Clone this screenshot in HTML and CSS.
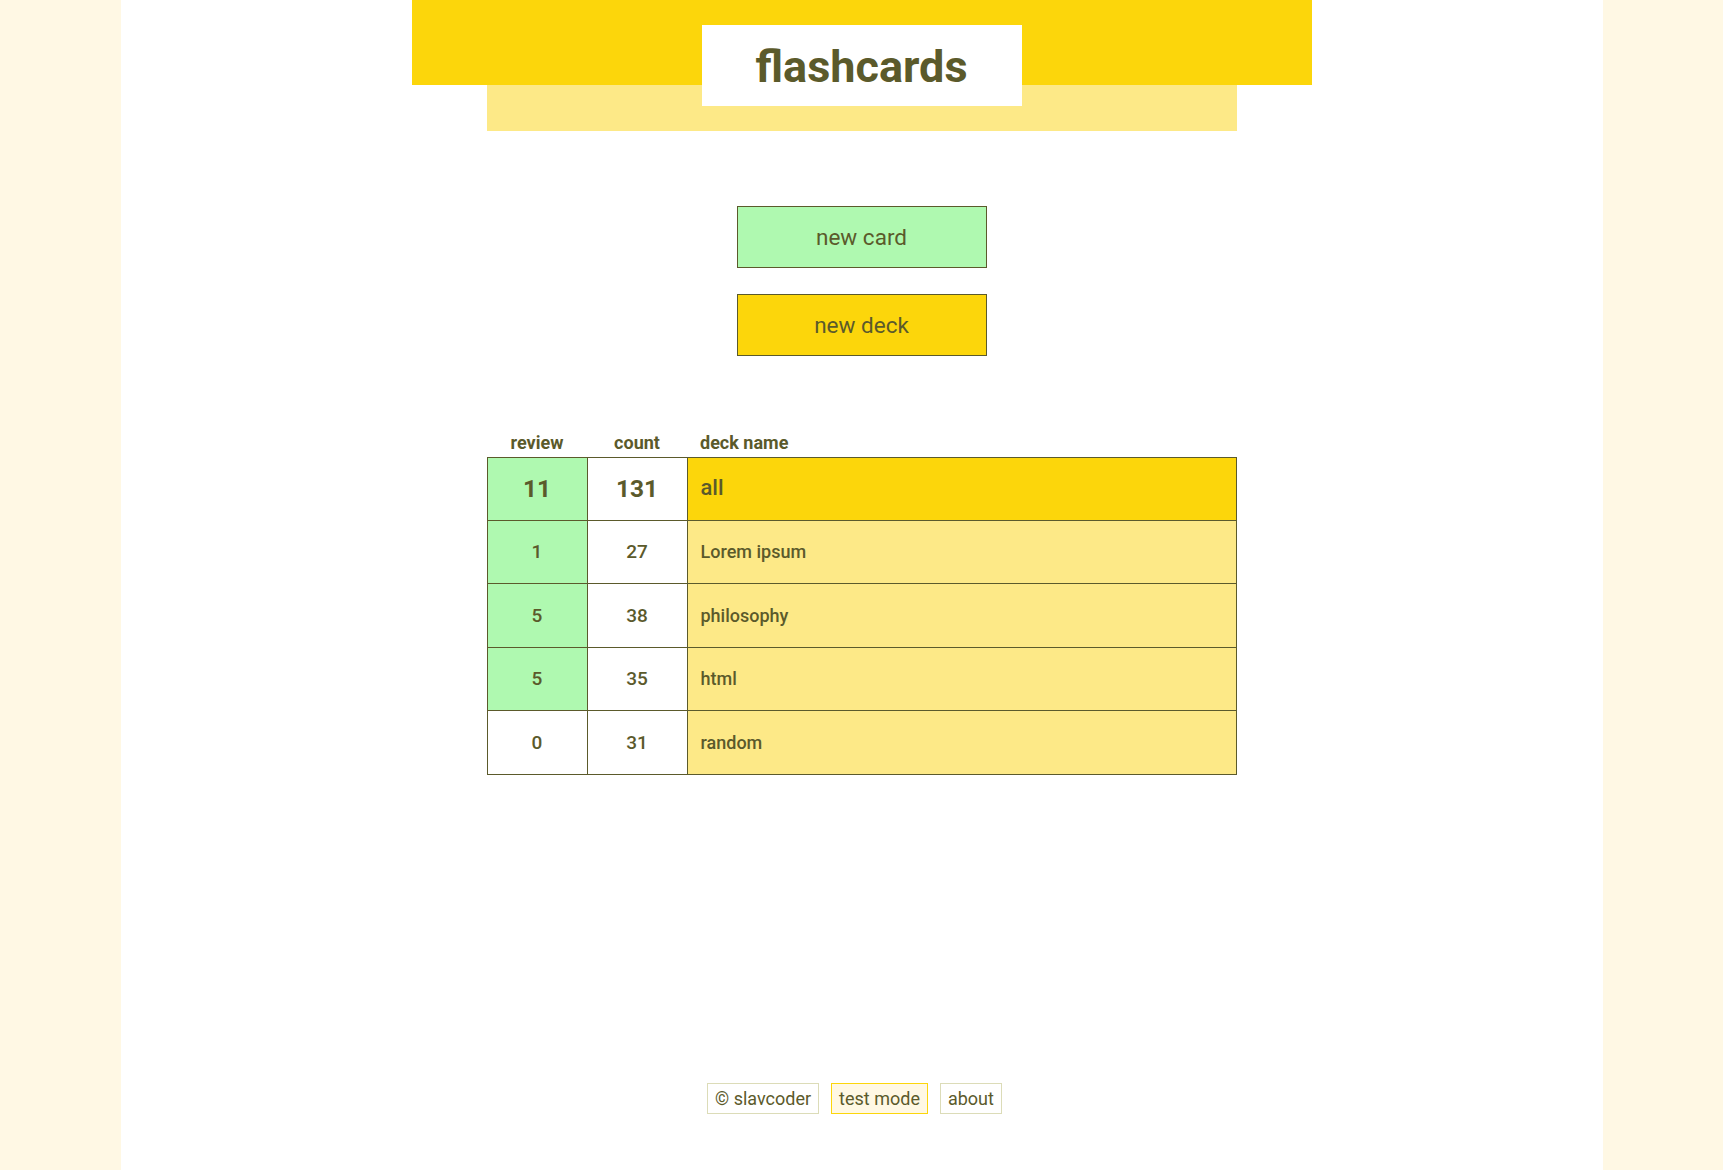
FILE: index.html
```html
<!DOCTYPE html>
<html lang="en">
<head>
<meta charset="utf-8">
<title>flashcards</title>
<link rel="stylesheet" href="styles.css">
</head>
<body>
<div class="page">
  <header class="header">
    <div class="header-bar"></div>
    <div class="header-band"></div>
    <h1 class="title">flashcards</h1>
  </header>

  <nav class="actions">
    <button class="btn btn-card">new card</button>
    <button class="btn btn-deck">new deck</button>
  </nav>

  <table class="decks">
    <thead>
      <tr>
        <th class="col-num">review</th>
        <th class="col-num">count</th>
        <th class="col-name">deck name</th>
      </tr>
    </thead>
    <tbody>
      <tr class="row-all">
        <td class="num review-on">11</td>
        <td class="num">131</td>
        <td class="name name-all">all</td>
      </tr>
      <tr>
        <td class="num review-on">1</td>
        <td class="num">27</td>
        <td class="name">Lorem ipsum</td>
      </tr>
      <tr>
        <td class="num review-on">5</td>
        <td class="num">38</td>
        <td class="name">philosophy</td>
      </tr>
      <tr>
        <td class="num review-on">5</td>
        <td class="num">35</td>
        <td class="name">html</td>
      </tr>
      <tr>
        <td class="num">0</td>
        <td class="num">31</td>
        <td class="name">random</td>
      </tr>
    </tbody>
  </table>

  <footer class="footer">
    <span class="foot-item">© slavcoder</span>
    <span class="foot-item foot-test">test mode</span>
    <span class="foot-item">about</span>
  </footer>
</div>
</body>
</html>
```

FILE: styles.css
```css
* { box-sizing: border-box; }

html, body {
  margin: 0;
  padding: 0;
}

body {
  background: #fff8e4;
  font-family: Roboto, "Liberation Sans", sans-serif;
  color: #5b5a2b;
}

.page {
  width: 1482px;
  margin: 0 auto;
  background: #ffffff;
  min-height: 100vh;
  display: flex;
  flex-direction: column;
  align-items: center;
}

.header {
  position: relative;
  width: 900px;
  display: flex;
  flex-direction: column;
  align-items: center;
}

.header-bar {
  width: 900px;
  height: 85px;
  background: #fcd60b;
}

.header-band {
  width: 750px;
  height: 46px;
  background: #fde987;
}

.title {
  position: absolute;
  top: 25px;
  left: 50%;
  transform: translateX(-50%);
  width: 320px;
  height: 81px;
  margin: 0;
  padding-top: 2px;
  background: #ffffff;
  display: flex;
  align-items: center;
  justify-content: center;
  font-size: 45px;
  font-weight: 700;
  color: #5b5a2b;
}

.actions {
  margin-top: 75px;
  display: flex;
  flex-direction: column;
  align-items: center;
  gap: 26px;
}

.btn {
  width: 250px;
  height: 62px;
  border: 1px solid #5b5a2b;
  font-family: Roboto, "Liberation Sans", sans-serif;
  font-size: 22.5px;
  color: #5b5a2b;
  cursor: pointer;
  padding: 0;
}

.btn-card { background: #aff9b0; }
.btn-deck { background: #fcd60b; }

.decks {
  margin-top: 74px;
  width: 750px;
  border-collapse: collapse;
  table-layout: fixed;
}

.decks th {
  font-size: 18px;
  font-weight: 700;
  padding: 0 0 4px;
  height: 27px;
  vertical-align: bottom;
}

.col-num {
  width: 100px;
  text-align: center;
}

.col-name {
  text-align: left;
  padding-left: 13px !important;
}

.decks td {
  border: 1px solid #5b5a2b;
  height: 63.5px;
  font-size: 18px;
  font-weight: 500;
}

.num {
  text-align: center;
  background: #ffffff;
  font-size: 19px !important;
}

.review-on { background: #aff9b0; }

.name {
  background: #fde987;
  padding-left: 13px;
}

.row-all td {
  font-size: 24px;
  font-weight: 700;
  height: 63px;
}

.row-all .num {
  font-size: 24.5px !important;
}

.row-all .name-all {
  background: #fcd60b;
  font-size: 22px;
  font-weight: 500;
  padding-bottom: 4px;
}

.footer {
  margin-top: auto;
  padding-bottom: 56px;
  padding-right: 14px;
  display: flex;
  gap: 12px;
}

.foot-item {
  border: 1px solid #dcdcb8;
  padding: 4px 7px;
  font-size: 18px;
  line-height: 21px;
}

.foot-test {
  border-color: #fcd60b;
  background: #fff8e4;
}
```
